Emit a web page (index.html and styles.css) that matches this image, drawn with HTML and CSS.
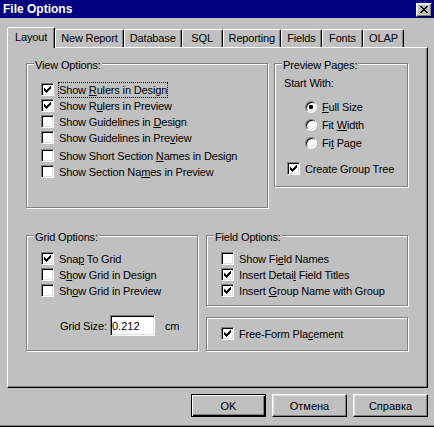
FILE: index.html
```html
<!DOCTYPE html>
<html lang="en">
<head>
  <meta charset="UTF-8" />
  <title>File Options</title>
  <link rel="stylesheet" href="styles.css">
</head>
<body>

  <svg class="defs" width="0" height="0">
    <symbol id="tick" viewBox="0 0 7 7">
      <path d="M0 2H1V3H2V4H3V3H4V2H5V1H6V0H7V3H6V4H5V5H4V6H3V7H2V6H1V5H0Z" />
    </symbol>
  </svg>

  <div class="window">
    <div class="titlebar">
      <span class="title">File Options</span>
      <button class="close-btn" aria-label="Close">
        <svg width="8" height="7" viewBox="0 0 8 7" shape-rendering="crispEdges">
          <path d="M0 0h2v1H0zM6 0h2v1H6zM1 1h2v1H1zM5 1h2v1H5zM2 2h4v1H2zM3 3h2v1H3zM2 4h4v1H2zM1 5h2v1H1zM5 5h2v1H5zM0 6h2v1H0zM6 6h2v1H6z" />
        </svg>
      </button>
    </div>

    <div class="tabs">
      <div class="tab active">Layout</div>
      <div class="tab">New Report</div>
      <div class="tab">Database</div>
      <div class="tab">SQL</div>
      <div class="tab">Reporting</div>
      <div class="tab">Fields</div>
      <div class="tab">Fonts</div>
      <div class="tab">OLAP</div>
    </div>

    <div class="panel">
      <div class="row">
        <div class="group view-group">
          <span class="group-title">View Options:</span>
          <div class="check"><span class="box"><svg><use href="#tick" /></svg></span><span class="label focus">Show <u>R</u>ulers in Design</span></div>
          <div class="check"><span class="box"><svg><use href="#tick" /></svg></span><span class="label">Show R<u>u</u>lers in Preview</span></div>
          <div class="check"><span class="box"></span><span class="label">Show Guidelines in <u>D</u>esign</span></div>
          <div class="check"><span class="box"></span><span class="label">Show Guidelines in Pre<u>v</u>iew</span></div>
          <div class="check spaced"><span class="box"></span><span class="label">Show Short Section <u>N</u>ames in Design</span></div>
          <div class="check"><span class="box"></span><span class="label">Show Section Na<u>m</u>es in Preview</span></div>
        </div>

        <div class="group preview-group">
          <span class="group-title">Preview Pages:</span>
          <div class="start-label">Start With:</div>
          <div class="radios">
            <div class="radio-row"><span class="radio on"></span><span class="label"><u>F</u>ull Size</span></div>
            <div class="radio-row"><span class="radio"></span><span class="label">Fit <u>W</u>idth</span></div>
            <div class="radio-row"><span class="radio"></span><span class="label">Fi<u>t</u> Page</span></div>
          </div>
          <div class="check tree-check"><span class="box"><svg><use href="#tick" /></svg></span><span class="label">Create Group Tree</span></div>
        </div>
      </div>

      <div class="row bottom-row">
        <div class="group grid-group">
          <span class="group-title">Grid Options:</span>
          <div class="check"><span class="box"><svg><use href="#tick" /></svg></span><span class="label">Sna<u>p</u> To Grid</span></div>
          <div class="check"><span class="box"></span><span class="label">S<u>h</u>ow Grid in Design</span></div>
          <div class="check"><span class="box"></span><span class="label">Sh<u>o</u>w Grid in Preview</span></div>
          <div class="size-row">
            <span class="size-label">Grid Size:</span>
            <input class="size-input" type="text" value="0.212">
            <span class="unit">cm</span>
          </div>
        </div>

        <div class="right-col">
          <div class="group field-group">
            <span class="group-title">Field Options:</span>
            <div class="check"><span class="box"></span><span class="label">Show Fi<u>e</u>ld Names</span></div>
            <div class="check"><span class="box"><svg><use href="#tick" /></svg></span><span class="label">Insert Detai<u>l</u> Field Titles</span></div>
            <div class="check"><span class="box"><svg><use href="#tick" /></svg></span><span class="label">Insert <u>G</u>roup Name with Group</span></div>
          </div>
          <div class="group free-group">
            <div class="check"><span class="box"><svg><use href="#tick" /></svg></span><span class="label">Free-Form Pla<u>c</u>ement</span></div>
          </div>
        </div>
      </div>
    </div>

    <div class="buttons">
      <button class="btn default">OK</button>
      <button class="btn">Отмена</button>
      <button class="btn">Справка</button>
    </div>
  </div>

</body>
</html>
```

FILE: styles.css
```css
body {
  margin: 0;
  width: 434px;
  height: 427px;
  overflow: hidden;
  background: #c0c0c0;
  font-family: "Liberation Sans", Arial, sans-serif;
  font-size: 11px;
  letter-spacing: -0.15px;
  color: #000;
}

.defs {
  position: absolute;
}

.window {
  height: 427px;
  box-sizing: border-box;
  border-bottom: 1px solid #000;
  box-shadow: inset 0 -1px #808080;
}

/* title bar */
.titlebar {
  height: 18px;
  background: #000080;
  display: flex;
  justify-content: space-between;
  padding-left: 3px;
}

.title {
  color: #fff;
  font-weight: bold;
  font-size: 12px;
  letter-spacing: 0;
  line-height: 18px;
}

.close-btn {
  width: 16px;
  height: 14px;
  margin: 3px 2px 0 0;
  padding: 0 0 1px 0;
  box-sizing: border-box;
  background: #c0c0c0;
  border: 1px solid;
  border-color: #fff #000 #000 #fff;
  box-shadow: inset -1px -1px #808080, inset 1px 1px #dfdfdf;
  display: flex;
  align-items: center;
  justify-content: center;
}

.close-btn svg {
  display: block;
}

/* tabs */
.tabs {
  display: flex;
  align-items: flex-end;
  height: 20px;
  margin-top: 9px;
  padding-left: 9px;
}

.tab {
  height: 18px;
  min-width: 41px;
  padding: 0 5px;
  box-sizing: border-box;
  border: 1px solid;
  border-bottom: 0;
  border-color: #fff #000 transparent #fff;
  border-radius: 2px 2px 0 0;
  box-shadow: inset -1px 0 #808080;
  line-height: 17px;
  text-align: center;
  white-space: nowrap;
}

.tab.active {
  height: 21px;
  margin: 0 0 -1px -2px;
  padding: 0 7px;
  line-height: 18px;
  background: #c0c0c0;
  position: relative;
  z-index: 1;
}

/* tab page */
.panel {
  height: 341px;
  margin: 0 6px 0 7px;
  padding: 15px 0 0 18px;
  box-sizing: border-box;
  border: 1px solid;
  border-color: #fff #000 #000 #fff;
  box-shadow: inset -1px -1px #808080;
}

.row {
  display: flex;
  align-items: flex-start;
  gap: 6px;
}

.bottom-row {
  margin-top: 27px;
  gap: 8px;
}

.group {
  position: relative;
  box-sizing: border-box;
  border: 1px solid #808080;
  box-shadow: 1px 1px 0 #fff, inset 1px 1px 0 #fff;
}

.group-title {
  position: absolute;
  top: -5px;
  left: 7px;
  padding: 0 1px;
  line-height: 13px;
  background: #c0c0c0;
  white-space: nowrap;
}

.view-group {
  width: 242px;
  height: 145px;
  padding: 18px 0 0 14px;
}

.preview-group {
  width: 134px;
  height: 124px;
  padding: 11px 0 0 9px;
}

.grid-group {
  width: 172px;
  height: 116px;
  padding: 15px 0 0 14px;
}

.right-col {
  display: flex;
  flex-direction: column;
  gap: 11px;
}

.field-group {
  width: 202px;
  height: 71px;
  padding: 15px 0 0 14px;
}

.free-group {
  width: 202px;
  height: 34px;
  padding: 8px 0 0 14px;
}

/* check boxes */
.check {
  display: flex;
  align-items: flex-start;
  height: 16px;
}

.check.spaced {
  margin-top: 2px;
}

.box {
  flex: none;
  width: 13px;
  height: 13px;
  margin-top: 1px;
  box-sizing: border-box;
  background: #fff;
  border: 1px solid;
  border-color: #808080 #fff #fff #808080;
  box-shadow: inset 1px 1px #000, inset -1px -1px #dfdfdf;
}

.box svg {
  display: block;
  width: 7px;
  height: 7px;
  margin: 2px 0 0 2px;
  shape-rendering: crispEdges;
}

.label {
  margin-left: 4px;
  border: 1px solid transparent;
  line-height: 14px;
  white-space: nowrap;
}

.label.focus {
  border: 1px dotted #000;
}

u {
  text-underline-offset: 1px;
}

/* preview pages */
.start-label {
  line-height: 16px;
}

.radios {
  margin: 7px 0 0 21px;
}

.radio-row {
  display: flex;
  align-items: center;
  height: 18px;
}

.radio {
  flex: none;
  width: 12px;
  height: 12px;
  box-sizing: border-box;
  border-radius: 50%;
  background: #fff;
  border: 1px solid;
  border-color: #808080 #fff #fff #808080;
  box-shadow: inset 1px 1px #000, inset -1px -1px #dfdfdf;
  display: flex;
  align-items: center;
  justify-content: center;
}

.radio.on::after {
  content: "";
  width: 4px;
  height: 4px;
  border-radius: 1px;
  background: #000;
}

.radio-row .label {
  margin-left: 4px;
}

.tree-check {
  margin: 9px 0 0 3px;
}

/* grid size */
.size-row {
  display: flex;
  align-items: center;
  height: 21px;
  margin-top: 16px;
}

.size-label {
  width: 50px;
  margin-left: 19px;
}

.size-input {
  width: 45px;
  height: 21px;
  box-sizing: border-box;
  padding: 0 1px;
  margin: 0;
  font: inherit;
  color: #000;
  background: #fff;
  border: 1px solid;
  border-color: #808080 #fff #fff #808080;
  box-shadow: inset 1px 1px #000, inset -1px -1px #dfdfdf;
  outline: none;
}

.unit {
  margin-left: 10px;
}

/* dialog buttons */
.buttons {
  display: flex;
  justify-content: flex-end;
  gap: 6px;
  margin: 6px 6px 0 0;
}

.btn {
  width: 75px;
  height: 23px;
  padding: 0;
  box-sizing: border-box;
  font: inherit;
  color: #000;
  background: #c0c0c0;
  border: 1px solid;
  border-color: #fff #000 #000 #fff;
  box-shadow: inset -1px -1px #808080, inset 1px 1px #dfdfdf;
}

.btn.default {
  border-color: #000;
  box-shadow: inset 1px 1px #fff, inset -1px -1px #000, inset -2px -2px #808080;
}
```
